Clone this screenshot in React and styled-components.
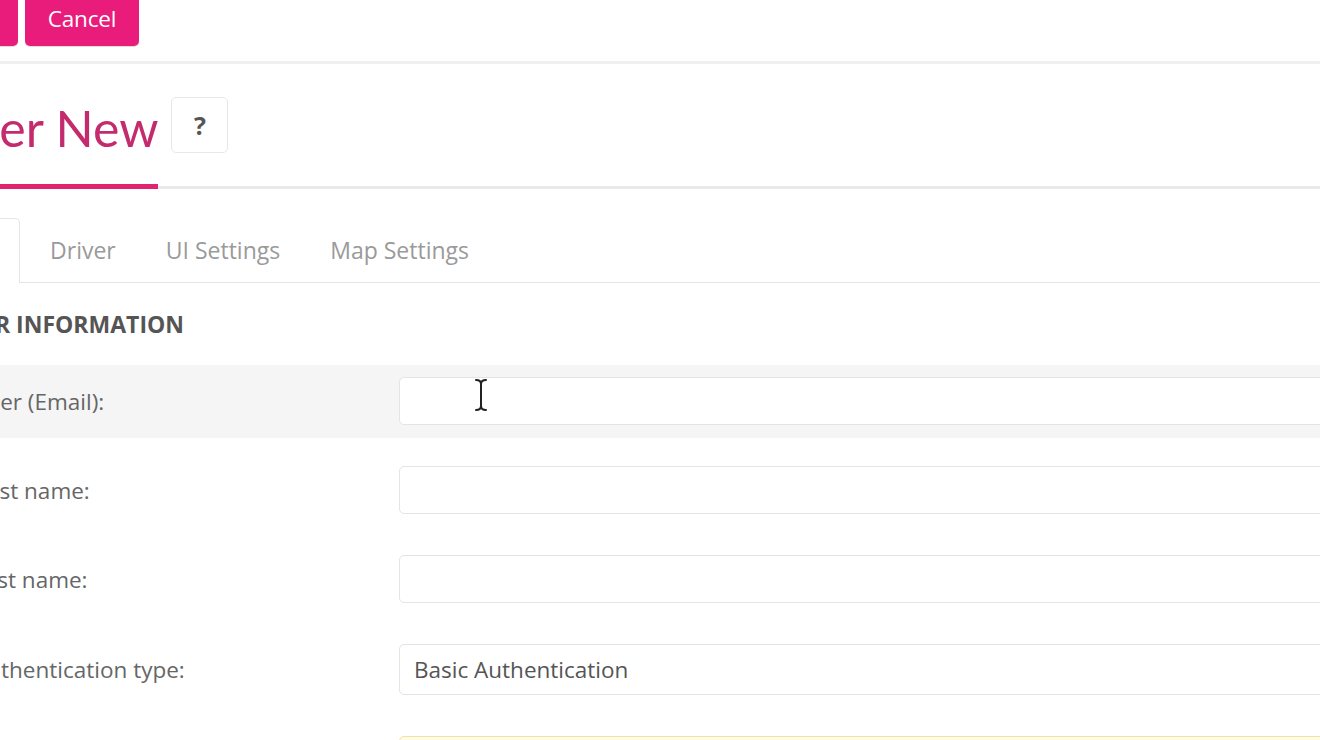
import React from "react";
import styled, { createGlobalStyle } from "styled-components";

const GlobalStyle = createGlobalStyle`
  html, body { margin: 0; padding: 0; background: #ffffff; overflow: hidden; }
  body { font-family: "Open Sans", "Noto Sans", sans-serif; color: #555; }
  * { box-sizing: border-box; }
`;

const Viewport = styled.div`
  width: 1320px;
  height: 740px;
  overflow: hidden;
  background: #fff;
`;

const Canvas = styled.div`
  margin-left: -90px;
  width: 1700px;
`;

const Toolbar = styled.div`
  display: flex;
  gap: 7px;
  margin-top: -10px;
  padding-left: 20px;
`;

const PinkButton = styled.button`
  height: 56px;
  width: ${(p) => p.$w}px;
  padding: 0;
  border: none;
  border-radius: 5px;
  background: #e91c7b;
  color: #fff;
  font-family: "Open Sans", sans-serif;
  font-size: 22.5px;
  letter-spacing: -0.2px;
  box-shadow: 0 1px 1px rgba(0, 0, 0, 0.15);
`;

const TopRule = styled.div`
  margin-top: 15px;
  height: 3px;
  background: #f0f0f0;
`;

const HeaderBar = styled.div`
  display: flex;
  align-items: flex-start;
  padding: 33px 0 0 20px;
  border-bottom: 3px solid #e9e9e9;
`;

const TitleBlock = styled.div`
  padding: 3px 0 28px 12px;
  border-bottom: 5px solid #e0246f;
  margin-bottom: -3px;
`;

const Title = styled.h1`
  margin: 0;
  font-family: "Lato", "Open Sans", sans-serif;
  font-weight: 400;
  font-size: 50px;
  line-height: 56px;
  color: #c42b6d;
`;

const HelpBox = styled.div`
  margin-left: 13px;
  width: 57px;
  height: 56px;
  display: flex;
  align-items: center;
  justify-content: center;
  border: 1px solid #e8e8e8;
  border-radius: 5px;
  font-weight: 700;
  font-size: 25px;
  color: #555;
`;

const TabBar = styled.div`
  margin-top: 29px;
  display: flex;
  align-items: flex-end;
  padding-left: 8px;
  border-bottom: 1px solid #e4e4e4;
`;

const Tab = styled.div`
  height: 64px;
  line-height: 64px;
  padding: 0 25px;
  margin-left: ${(p) => (p.$first ? 5 : 0)}px;
  font-size: 23px;
  color: ${(p) => (p.$active ? "#555" : "#9a9a9a")};
  ${(p) =>
    p.$active &&
    `
    height: 65px;
    margin-bottom: -1px;
    background: #fff;
    border: 1px solid #e4e4e4;
    border-bottom: none;
    border-radius: 5px 5px 0 0;
  `}
`;

const SectionHeading = styled.h2`
  margin: 26px 0 0 42px;
  font-size: 23px;
  line-height: 30px;
  font-weight: 700;
  color: #555;
`;

const Form = styled.div`
  margin: 26px 0 0 50px;
  display: flex;
  flex-direction: column;
  gap: 16px;
`;

const Row = styled.div`
  display: grid;
  grid-template-columns: 426px 1fr;
  align-items: center;
  padding: 12px 0 13px 13px;
  background: ${(p) => (p.$shaded ? "#f5f5f5" : "transparent")};
`;

const Label = styled.label`
  font-size: 22.5px;
  color: #666;
`;

const Field = styled.div`
  position: relative;
  height: ${(p) => (p.$tall ? 51 : 48)}px;
  display: flex;
  align-items: center;
  padding-left: 14px;
  border: 1px solid ${(p) => (p.$warn ? "#f1e3a0" : "#e4e4e4")};
  border-radius: 5px;
  background: ${(p) => (p.$warn ? "#fffbe6" : "#fff")};
  font-size: 22.5px;
  color: #555;
`;

const Cursor = styled.svg`
  position: absolute;
  left: 74px;
  top: 0px;
`;

function IBeam() {
  const d =
    "M2 2 C5 2 7 3 7 6 V28 C7 31 5 32 2 32 M12 2 C9 2 7 3 7 6 M7 28 C7 31 9 32 12 32";
  return (
    <Cursor width="14" height="34" viewBox="0 0 14 34">
      <path d={d} stroke="#fff" strokeWidth="4" fill="none" strokeLinecap="round" />
      <path d={d} stroke="#222" strokeWidth="2" fill="none" strokeLinecap="round" />
    </Cursor>
  );
}

const rows = [
  { label: "User (Email):", shaded: true, cursor: true },
  { label: "First name:" },
  { label: "Last name:" },
  { label: "Authentication type:", value: "Basic Authentication", tall: true },
  { label: "Password:", warn: true },
];

export default function App() {
  return (
    <Viewport>
      <GlobalStyle />
      <Canvas>
        <Toolbar>
          <PinkButton $w={88}>Save</PinkButton>
          <PinkButton $w={114}>Cancel</PinkButton>
        </Toolbar>
        <TopRule />
        <HeaderBar>
          <TitleBlock>
            <Title>User New</Title>
          </TitleBlock>
          <HelpBox>?</HelpBox>
        </HeaderBar>
        <TabBar>
          <Tab $active>User</Tab>
          <Tab $first>Driver</Tab>
          <Tab>UI Settings</Tab>
          <Tab>Map Settings</Tab>
        </TabBar>
        <SectionHeading>USER INFORMATION</SectionHeading>
        <Form>
          {rows.map((r) => (
            <Row key={r.label} $shaded={r.shaded}>
              <Label>{r.label}</Label>
              <Field $warn={r.warn} $tall={r.tall}>
                {r.value}
                {r.cursor && <IBeam />}
              </Field>
            </Row>
          ))}
        </Form>
      </Canvas>
    </Viewport>
  );
}
